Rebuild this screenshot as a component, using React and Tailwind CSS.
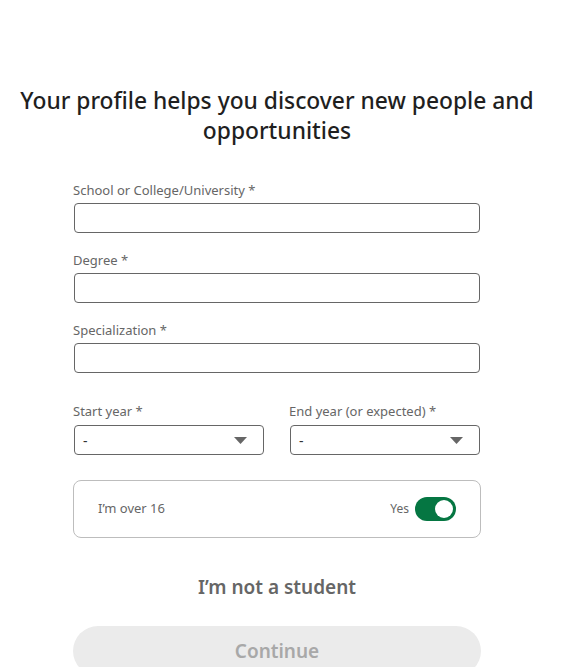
import { useState } from "react";

const font = { fontFamily: '"Noto Sans", "Open Sans", sans-serif' };

const Field = ({ label }) => (
  <div className="flex flex-col">
    <label className="text-[13px] leading-[16px] text-[#666666] mb-[5px]">{label}</label>
    <input className="h-[30px] ml-px w-[406px] border border-[#666666] rounded-[4px] px-2 text-sm outline-none" />
  </div>
);

const YearSelect = ({ label }) => (
  <div className="flex flex-col">
    <label className="text-[13px] leading-[16px] text-[#666666] mb-[6px]">{label}</label>
    <div className="h-[30px] ml-px mr-px border border-[#666666] rounded-[4px] flex items-center justify-between pl-2 pr-[16px]">
      <span className="text-[14px] text-[#333333]">-</span>
      <svg width="13" height="7" viewBox="0 0 13 7">
        <path d="M0 0 H13 L6.5 7 Z" fill="#666666" />
      </svg>
    </div>
  </div>
);

export default function App() {
  const [over16, setOver16] = useState(true);

  return (
    <div className="w-[554px] bg-white min-h-screen pt-[86px]" style={font}>
      <h1 className="text-[22.8px] leading-[30px] font-medium text-[#1f1f1f] text-center px-3">
        Your profile helps you discover new people and opportunities
      </h1>

      <div className="w-[408px] mx-auto mt-[36px] flex flex-col">
        <div className="flex flex-col gap-[19px]">
          <Field label="School or College/University *" />
          <Field label="Degree *" />
          <Field label="Specialization *" />
        </div>

        <div className="grid grid-cols-2 gap-[24px] mt-[30px]">
          <YearSelect label="Start year *" />
          <YearSelect label="End year (or expected) *" />
        </div>

        <div className="mt-[25px] h-[58px] border border-[#bdbdbd] rounded-[8px] flex items-center justify-between pl-[24px] pr-[24px]">
          <span className="text-[13px] text-[#666666]">I’m over 16</span>
          <div className="flex items-center gap-[6px]">
            <span className="text-[12px] text-[#666666]">Yes</span>
            <button
              onClick={() => setOver16((v) => !v)}
              className={
                over16
                  ? "w-[41px] h-[24px] rounded-full bg-[#057642] flex items-center justify-end px-[3px]"
                  : "w-[41px] h-[24px] rounded-full bg-[#8c8c8c] flex items-center justify-start px-[3px]"
              }
            >
              <span className="w-[18px] h-[18px] rounded-full bg-white block" />
            </button>
          </div>
        </div>

        <button className="mt-[37px] text-[19px] leading-[24px] font-semibold text-[#666666] text-center">
          I’m not a student
        </button>

        <button className="mt-[27px] h-[50px] rounded-full bg-[#ebebeb] text-[19px] font-semibold text-[#a8a8a8]">
          Continue
        </button>
      </div>
    </div>
  );
}
